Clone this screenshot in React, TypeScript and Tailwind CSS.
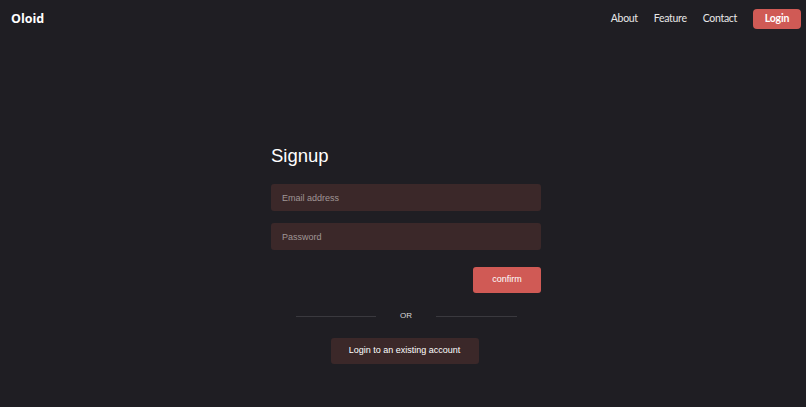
import React from 'react';

const navLinks = ['About', 'Feature', 'Contact'];

export default function App() {
  return (
    <div className="min-h-screen w-full bg-[#1f1e23] flex flex-col">
      {/* Navbar */}
      <nav className="h-[38px] flex items-center justify-between pl-[11px] pr-[5px] font-['Open_Sans',sans-serif]">
        <div className="text-white font-bold text-[12.5px]">Oloid</div>
        <div className="flex items-center font-['Lato',sans-serif]">
          {navLinks.map((link) => (
            <a key={link} className="text-[#e8e8e8] text-[10.5px] tracking-[-0.3px] mr-[16px] cursor-pointer">
              {link}
            </a>
          ))}
          <button className="bg-[#d05a55] text-white text-[10.5px] tracking-[-0.2px] font-bold rounded-[4px] w-[48px] h-[20px] flex items-center justify-center">
            Login
          </button>
        </div>
      </nav>

      {/* Form */}
      <div className="flex justify-center pt-[106px] pl-[6px] font-['Liberation_Sans',Arial,sans-serif]">
        <div className="w-[270px] flex flex-col">
          <h1 className="text-white text-[18.5px] leading-[24px] mb-[16px]">Signup</h1>
          <input
            placeholder="Email address"
            className="h-[27px] bg-[#3b2829] rounded-[3px] px-[11px] text-[9px] text-white placeholder:text-[#a09696] outline-none mb-[12px]"
          />
          <input
            type="password"
            placeholder="Password"
            className="h-[27px] bg-[#3b2829] rounded-[3px] px-[11px] text-[9px] text-white placeholder:text-[#a09696] outline-none mb-[17px]"
          />
          <div className="flex justify-end">
            <button className="w-[68px] h-[26px] bg-[#d05a55] rounded-[3px] text-white text-[9px]">
              confirm
            </button>
          </div>
          <div className="flex items-center justify-center mt-[17px]">
            <div className="w-[80px] h-px bg-[#3a393e] ml-[25px]" />
            <span className="flex-1 text-center text-[#d8d8d8] text-[8px]">OR</span>
            <div className="w-[81px] h-px bg-[#3a393e] mr-[24px]" />
          </div>
          <div className="flex justify-center mt-[16px] pr-[3px]">
            <button className="w-[148px] h-[26px] bg-[#3b2829] rounded-[3px] text-white text-[9px]">
              Login to an existing account
            </button>
          </div>
        </div>
      </div>
    </div>
  );
}
